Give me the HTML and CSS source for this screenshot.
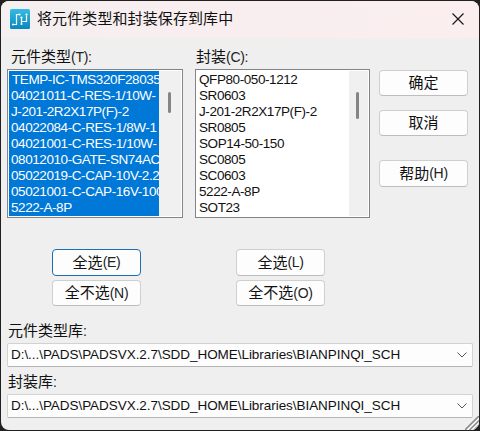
FILE: index.html
```
<!DOCTYPE html>
<html lang="zh-CN">
<head>
<meta charset="utf-8">
<title>将元件类型和封装保存到库中</title>
<link rel="stylesheet" href="styles.css">
</head>
<body>
<div class="dialog">
  <header class="titlebar">
    <svg class="app-icon" width="20" height="20" viewBox="0 0 20 20">
      <defs><linearGradient id="g" x1="0" y1="0" x2="0" y2="1"><stop offset="0" stop-color="#35bce2"/><stop offset="1" stop-color="#0a86c0"/></linearGradient></defs>
      <rect width="20" height="20" rx="1.5" fill="url(#g)"/>
      <path d="M3 15.5H6.5V5.500H9.500M11.500 8.500V14.500M11.500 12.500H16.500V6.500" fill="none" stroke="#fff" stroke-width="1.2"/>
      <g fill="#fff"><circle cx="3" cy="15.500" r="1"/><circle cx="9.500" cy="5.500" r="1.100"/><circle cx="11.500" cy="8.500" r="1.100"/><circle cx="11.500" cy="15" r="1"/><circle cx="16.500" cy="5.500" r="1.100"/></g>
    </svg>
    <h1 class="title">将元件类型和封装保存到库中</h1>
    <svg class="close" width="12" height="12" viewBox="0 0 12 12"><path d="M.5.5l11 11M11.5.5l-11 11" fill="none" stroke="#1c1718" stroke-width="1.2"/></svg>
  </header>
  <main class="content">
    <div class="top">
      <section class="column parts">
        <label class="label">元件类型<span class="key">(T):</span></label>
        <div class="listbox selected">
          <ul class="items">
            <li class="first">TEMP-IC-TMS320F28035</li><li>04021011-C-RES-1/10W-</li><li>J-201-2R2X17P(F)-2</li><li>04022084-C-RES-1/8W-1</li><li>04021001-C-RES-1/10W-</li><li>08012010-GATE-SN74AC</li><li>05022019-C-CAP-10V-2.2</li><li>05021001-C-CAP-16V-100</li><li>5222-A-8P</li>
          </ul>
          <div class="scroll"><i class="thumb"></i></div>
        </div>
        <div class="pair">
          <button class="btn focus">全选<span class="key">(E)</span></button>
          <button class="btn">全不选<span class="key">(N)</span></button>
        </div>
      </section>
      <section class="column decals">
        <label class="label">封装<span class="key">(C):</span></label>
        <div class="listbox">
          <ul class="items">
            <li>QFP80-050-1212</li><li>SR0603</li><li>J-201-2R2X17P(F)-2</li><li>SR0805</li><li>SOP14-50-150</li><li>SC0805</li><li>SC0603</li><li>5222-A-8P</li><li>SOT23</li>
          </ul>
          <div class="scroll"><i class="thumb"></i></div>
        </div>
        <div class="pair">
          <button class="btn">全选<span class="key">(L)</span></button>
          <button class="btn">全不选<span class="key">(O)</span></button>
        </div>
      </section>
      <div class="actions">
        <button class="btn">确定</button>
        <button class="btn">取消</button>
        <button class="btn help">帮助<span class="key">(H)</span></button>
      </div>
    </div>
    <label class="label lib">元件类型库<span class="key">:</span></label>
    <div class="combo"><span>D:\...\PADS\PADSVX.2.7\SDD_HOME\Libraries\BIANPINQI_SCH</span><svg width="10" height="6" viewBox="0 0 10 6"><path d="M.5.5L5 5L9.5.5" fill="none" stroke="#555"/></svg></div>
    <label class="label lib second">封装库<span class="key">:</span></label>
    <div class="combo"><span>D:\...\PADS\PADSVX.2.7\SDD_HOME\Libraries\BIANPINQI_SCH</span><svg width="10" height="6" viewBox="0 0 10 6"><path d="M.5.5L5 5L9.5.5" fill="none" stroke="#555"/></svg></div>
  </main>
  <svg class="grip" width="14" height="14" viewBox="0 0 14 14"><path d="M14 0V14H0Z" fill="#fff"/><path d="M0 14L14 0M4.5 14L14 4.5M9 14L14 9" stroke="#8d8d8d" stroke-width="1.7"/></svg>
</div>
</body>
</html>
```
FILE: styles.css
```
* { box-sizing: border-box; }
body {
  margin: 0;
  height: 431px;
  padding: 1px;
  background: #211f20;
  color: #111;
  font: 13.5px/16px "Liberation Sans", "Noto Sans CJK SC", sans-serif;
  overflow: hidden;
}
.dialog {
  position: relative;
  height: 429px;
  border-radius: 8px;
  background: #efefef;
  overflow: hidden;
}
.titlebar {
  display: flex;
  align-items: center;
  height: 37px;
  padding: 0 15px 1px 9px;
  background: linear-gradient(90deg, #f4eff0, #f9eeef 45%, #faeeef);
}
.app-icon { flex: none; }
.title {
  flex: 1;
  margin: -2px 0 0 7px;
  font: 15px/20px "Noto Sans CJK SC", sans-serif;
  letter-spacing: 0.1px;
  white-space: nowrap;
}
.content { padding: 0 6px; }
.top { display: flex; height: 279px; padding-top: 8px; }
.column { display: flex; flex-direction: column; }
.parts { width: 176px; margin-right: 12px; }
.decals { width: 175px; margin-right: 9px; }
.label {
  flex: none;
  display: block;
  height: 23px;
  padding-left: 4px;
  font: 400 15px/20px "Noto Sans CJK SC", sans-serif;
  white-space: nowrap;
}
.decals .label { padding-left: 1px; }
.key { font: 14px/16px "Liberation Sans", sans-serif; letter-spacing: -0.3px; color: #222; }
.listbox {
  flex: none;
  display: flex;
  height: 149px;
  padding: 1px;
  border: 1px solid #82848a;
  background: #fff;
}
.items {
  flex: none;
  width: 152px;
  height: 145px;
  margin: 0;
  padding: 1px 0 0 2px;
  list-style: none;
  overflow: hidden;
  white-space: nowrap;
}
.items li { height: 16px; letter-spacing: -0.42px; }
.selected .items { width: 150px; background: #0078d7; color: #fff; }
.selected .first { padding-left: 1px; }
.scroll { flex: 1; display: flex; justify-content: center; padding-top: 21px; background: #f0f0f0; }
.thumb { width: 3px; height: 27px; margin-left: -3px; border-radius: 2px; background: #858585; }
.selected .thumb { height: 21px; margin-left: -1px; }
.pair { display: flex; flex-direction: column; gap: 4px; padding: 31px 0 0 45px; }
.decals .pair { padding-left: 41px; }
.btn {
  display: flex;
  align-items: center;
  justify-content: center;
  width: 89px;
  height: 26px;
  padding: 0 0 2px;
  border: 1px solid #cfcfcf;
  border-bottom-color: #bdbdbd;
  border-radius: 4px;
  background: #fdfdfd;
  color: #111;
  font: 400 15px/20px "Noto Sans CJK SC", sans-serif;
  white-space: nowrap;
}
.btn .key { padding-top: 1px; }
.btn.focus { height: 27px; border-color: #1b70b5; }
.decals .btn:first-child { height: 27px; }
.actions { display: flex; flex-direction: column; gap: 14px; padding-top: 24px; }
.help { height: 27px; margin-top: 10px; }
.lib { height: 26px; padding: 3px 0 0 1px; }
.lib.second { height: 27px; padding-top: 4px; }
.combo {
  display: flex;
  align-items: center;
  justify-content: space-between;
  height: 24px;
  padding: 0 5px 0 3px;
  border: 1px solid #d2d2d2;
  border-bottom-color: #b4b4b4;
  border-radius: 2px;
  background: #fdfdfd;
  letter-spacing: -0.05px;
  white-space: nowrap;
}
.grip { position: absolute; right: 0; bottom: 0; }
```
